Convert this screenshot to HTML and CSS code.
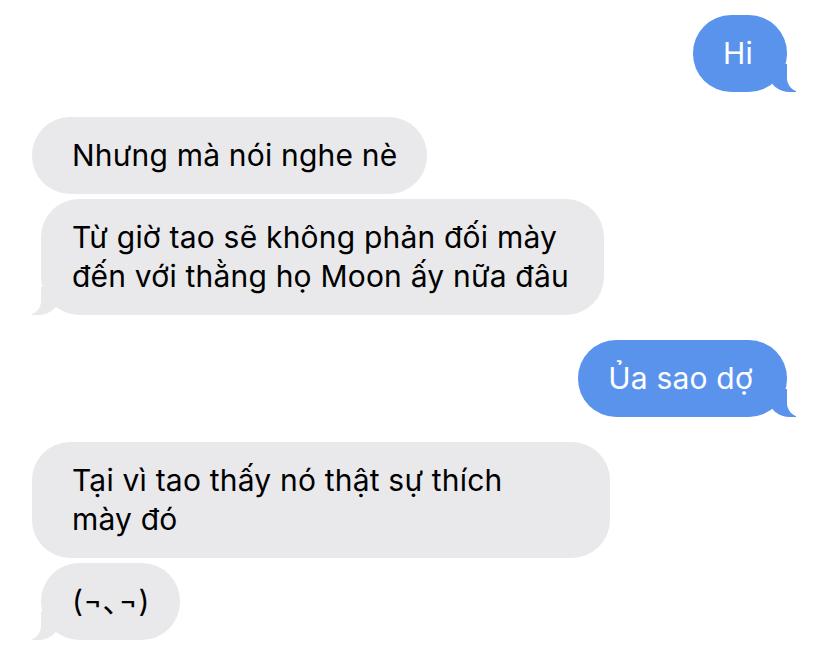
FILE: index.html
```html
<!DOCTYPE html>
<html lang="vi">
<head>
  <meta charset="UTF-8">
  <title>Tin nhắn</title>
  <link rel="stylesheet" href="styles.css">
</head>
<body>

  <div class="thread">
    <div class="group sent">
      <div class="bubble tail">Hi</div>
    </div>

    <div class="group received">
      <div class="bubble">Nhưng mà nói nghe nè</div>
      <div class="bubble tail">Từ giờ tao sẽ không phản đối mày đến với thằng họ Moon ấy nữa đâu</div>
    </div>

    <div class="group sent">
      <div class="bubble tail">Ủa sao dợ</div>
    </div>

    <div class="group received">
      <div class="bubble wide">Tại vì tao thấy nó thật sự thích mày đó</div>
      <div class="bubble tail kaomoji">(¬､¬)</div>
    </div>
  </div>

</body>
</html>
```

FILE: styles.css
```css
body { margin: 0; background: #fff; font-family: Inter, "Liberation Sans", "Noto Sans CJK JP", sans-serif; }
.thread { display: flex; flex-direction: column; gap: 25px; padding: 15px 41px 0 32px; }
.group { display: flex; flex-direction: column; gap: 5px; }
.group.sent { align-items: flex-end; }
.group.received { align-items: flex-start; }
.bubble { position: relative; max-width: 502px; padding: 19px 30px 19px 40px; border-radius: 38px; font-size: 30px; line-height: 39px; letter-spacing: 0.2px; color: #000; background: #e9e9eb; }
.received .bubble.tail { margin-left: 9px; padding-left: 31px; }
.bubble.wide { max-width: 470px; padding-right: 68px; }
.sent .bubble { padding: 19px 34px 19px 30px; color: #fff; background: #5a93ec; }
.bubble.tail::before, .bubble.tail::after { content: ""; position: absolute; bottom: 0; height: 28px; }
.received .bubble.tail::before { left: -9px; border-left: 28px solid #e9e9eb; border-bottom-right-radius: 22px 20px; }
.received .bubble.tail::after { left: -18px; width: 18px; background: #fff; border-bottom-right-radius: 14px; }
.sent .bubble.tail::before { right: -9px; border-right: 28px solid #5a93ec; border-bottom-left-radius: 22px 20px; }
.sent .bubble.tail::after { right: -18px; width: 18px; background: #fff; border-bottom-left-radius: 14px; }
```
